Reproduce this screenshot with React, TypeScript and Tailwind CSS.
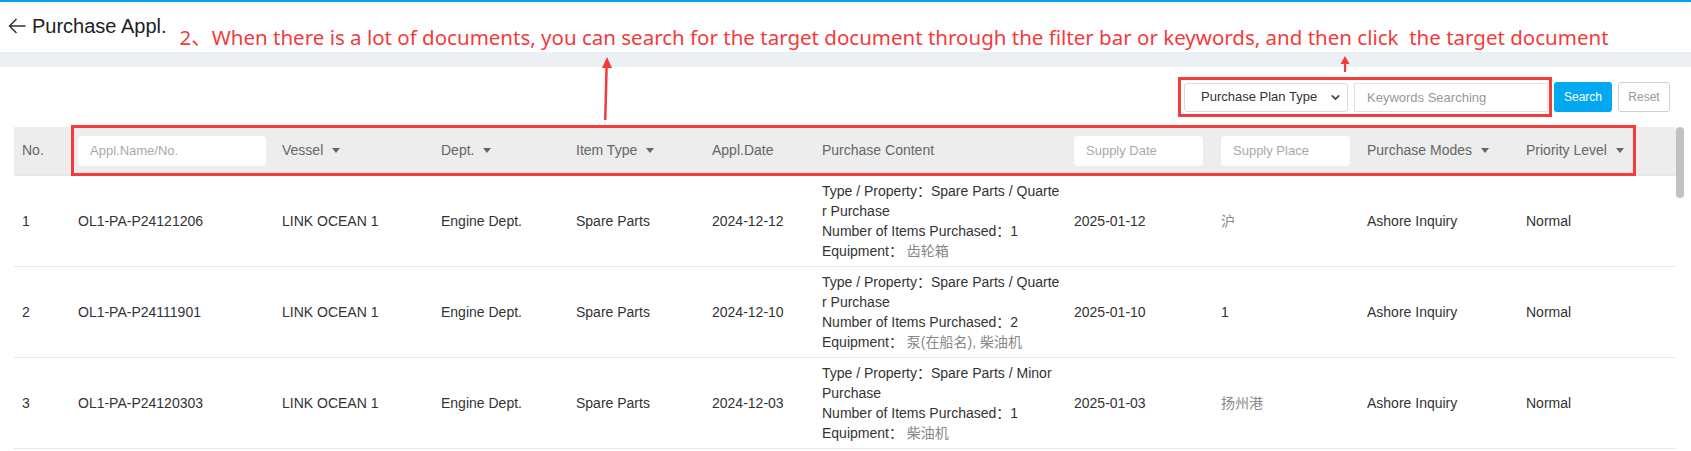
import { ChevronDown } from "lucide-react";

const rows = [
  {
    no: 1,
    code: "OL1-PA-P24121206",
    date: "2024-12-12",
    prop: "Spare Parts / Quarter Purchase",
    count: 1,
    equip: "齿轮箱",
    supply: "2025-01-12",
    place: "沪",
  },
  {
    no: 2,
    code: "OL1-PA-P24111901",
    date: "2024-12-10",
    prop: "Spare Parts / Quarter Purchase",
    count: 2,
    equip: "泵(在船名), 柴油机",
    supply: "2025-01-10",
    place: "1",
  },
  {
    no: 3,
    code: "OL1-PA-P24120303",
    date: "2024-12-03",
    prop: "Spare Parts / Minor Purchase",
    count: 1,
    equip: "柴油机",
    supply: "2025-01-03",
    place: "扬州港",
  },
];

const cols =
  "grid grid-cols-[56px_204px_159px_135px_136px_110px_252px_147px_146px_159px_1fr]";

function Caret() {
  return (
    <svg width="8" height="5" viewBox="0 0 8 5" className="ml-[9px] fill-[#666]">
      <path d="M0 0h8L4 5z" />
    </svg>
  );
}

function HeadInput({ ph }: { ph: string }) {
  return (
    <input
      readOnly
      placeholder={ph}
      className="h-[30px] rounded-[4px] bg-white pl-3 text-[13px] outline-none placeholder:text-[#a9a9a9]"
    />
  );
}

export default function App() {
  return (
    <div className="relative h-[451px] w-[1691px] overflow-hidden bg-white font-['Liberation_Sans','Noto_Sans_CJK_SC',sans-serif] text-[#333]">
      <div className="h-[2px] bg-[#0aa0e6] shadow-[0_1px_5px_rgba(0,0,0,0.12)]" />

      {/* header */}
      <div className="flex h-[50px] items-start">
        <div className="mt-[14px] flex items-center pl-[8px]">
          <svg width="18" height="16" viewBox="0 0 18 16" fill="none" stroke="#333" strokeWidth="1.5">
            <path d="M17.5 8H1.5M8.5 1l-7 7 7 7" />
          </svg>
          <span className="ml-[6px] text-[20px] leading-[20px] text-[#222]">Purchase Appl.</span>
        </div>
        <div className="ml-[13px] mt-[25px] whitespace-nowrap font-['Noto_Sans','Noto_Sans_CJK_SC',sans-serif] text-[20.5px] leading-[20px] text-[#f33b3b]">
          2、When there is a lot of documents, you can search for the target document through the filter bar or keywords, and then click&nbsp; the target document
        </div>
      </div>
      <div className="h-[15px] bg-[#eceff3]" />

      {/* filter bar */}
      <div className="flex items-center justify-end gap-[6px] pr-[21px] pt-[15px] text-[13px]">
        <div className="flex h-[29px] w-[164px] items-center justify-between rounded-[3px] border border-[#dcdcdc] pl-[16px] pr-[5px]">
          <span>Purchase Plan Type</span>
          <ChevronDown size={13} strokeWidth={3} className="text-[#444]" />
        </div>
        <input
          readOnly
          placeholder="Keywords Searching"
          className="h-[29px] w-[194px] border border-[#e2e2e2] pl-[12px] outline-none placeholder:text-[#999]"
        />
        <button className="h-[30px] w-[58px] rounded-[3px] bg-[#03a9f0] text-[12px] text-white">Search</button>
        <button className="h-[30px] w-[52px] rounded-[3px] border border-[#d0d0d0] bg-white text-[12px] text-[#999]">Reset</button>
      </div>

      {/* table */}
      <div className="mt-[15px] flex pl-[14px] pr-[5px]">
        <div className="flex-1 text-[14px]">
          <div className={`${cols} h-[49px] items-center border-b-2 border-[#e6e8eb] bg-[#ededed] text-[#666]`}>
            <div className="pl-2">No.</div>
            <div className="pl-2"><HeadInput ph="Appl.Name/No." /></div>
            <div className="flex items-center pl-2">Vessel<Caret /></div>
            <div className="flex items-center pl-2">Dept.<Caret /></div>
            <div className="flex items-center pl-2">Item Type<Caret /></div>
            <div className="pl-2">Appl.Date</div>
            <div className="pl-2">Purchase Content</div>
            <div className="pl-2 [&>input]:w-[129px]"><HeadInput ph="Supply Date" /></div>
            <div className="pl-2 [&>input]:w-[129px]"><HeadInput ph="Supply Place" /></div>
            <div className="flex items-center pl-2">Purchase Modes<Caret /></div>
            <div className="flex items-center pl-2">Priority Level<Caret /></div>
          </div>
          {rows.map((r) => (
            <div key={r.no} className={`${cols} h-[91px] items-center border-b border-[#e8e8e8]`}>
              <div className="pl-2">{r.no}</div>
              <div className="pl-2">{r.code}</div>
              <div className="pl-2">LINK OCEAN 1</div>
              <div className="pl-2">Engine Dept.</div>
              <div className="pl-2">Spare Parts</div>
              <div className="pl-2">{r.date}</div>
              <div className="pl-2">
                <div className="w-[238px] break-all leading-[20px]">
                  <div>Type / Property：{r.prop}</div>
                  <div>Number of Items Purchased：{r.count}</div>
                  <div>
                    Equipment： <span className="text-[#888]">{r.equip}</span>
                  </div>
                </div>
              </div>
              <div className="pl-2">{r.supply}</div>
              <div className={/[^\x00-\x7F]/.test(r.place) ? "pl-2 text-[#888]" : "pl-2"}>{r.place}</div>
              <div className="pl-2">Ashore Inquiry</div>
              <div className="pl-2">Normal</div>
            </div>
          ))}
        </div>
        <div className="w-[10px]">
          <div className="h-[71px] w-[8px] rounded-[4px] bg-[#c1c1c1]" />
        </div>
      </div>

      {/* annotation overlays */}
      <div className="absolute left-[1178px] top-[77px] h-[40px] w-[374px] border-[3px] border-[#f33b3b]" />
      <div className="absolute left-[71px] top-[125px] h-[51px] w-[1565px] border-[3px] border-[#f33b3b]" />
      <svg className="absolute left-[598px] top-[55px]" width="16" height="68" viewBox="0 0 16 68">
        <path d="M9 2L4 13h10z" fill="#f33b3b" />
        <path d="M8.6 12L7.2 65" stroke="#f33b3b" strokeWidth="2.5" />
      </svg>
      <svg className="absolute left-[1339px] top-[55px]" width="12" height="18" viewBox="0 0 12 18">
        <path d="M6 1L1.5 9h9z" fill="#f33b3b" />
        <path d="M6 8v9" stroke="#f33b3b" strokeWidth="2.2" />
      </svg>
    </div>
  );
}
